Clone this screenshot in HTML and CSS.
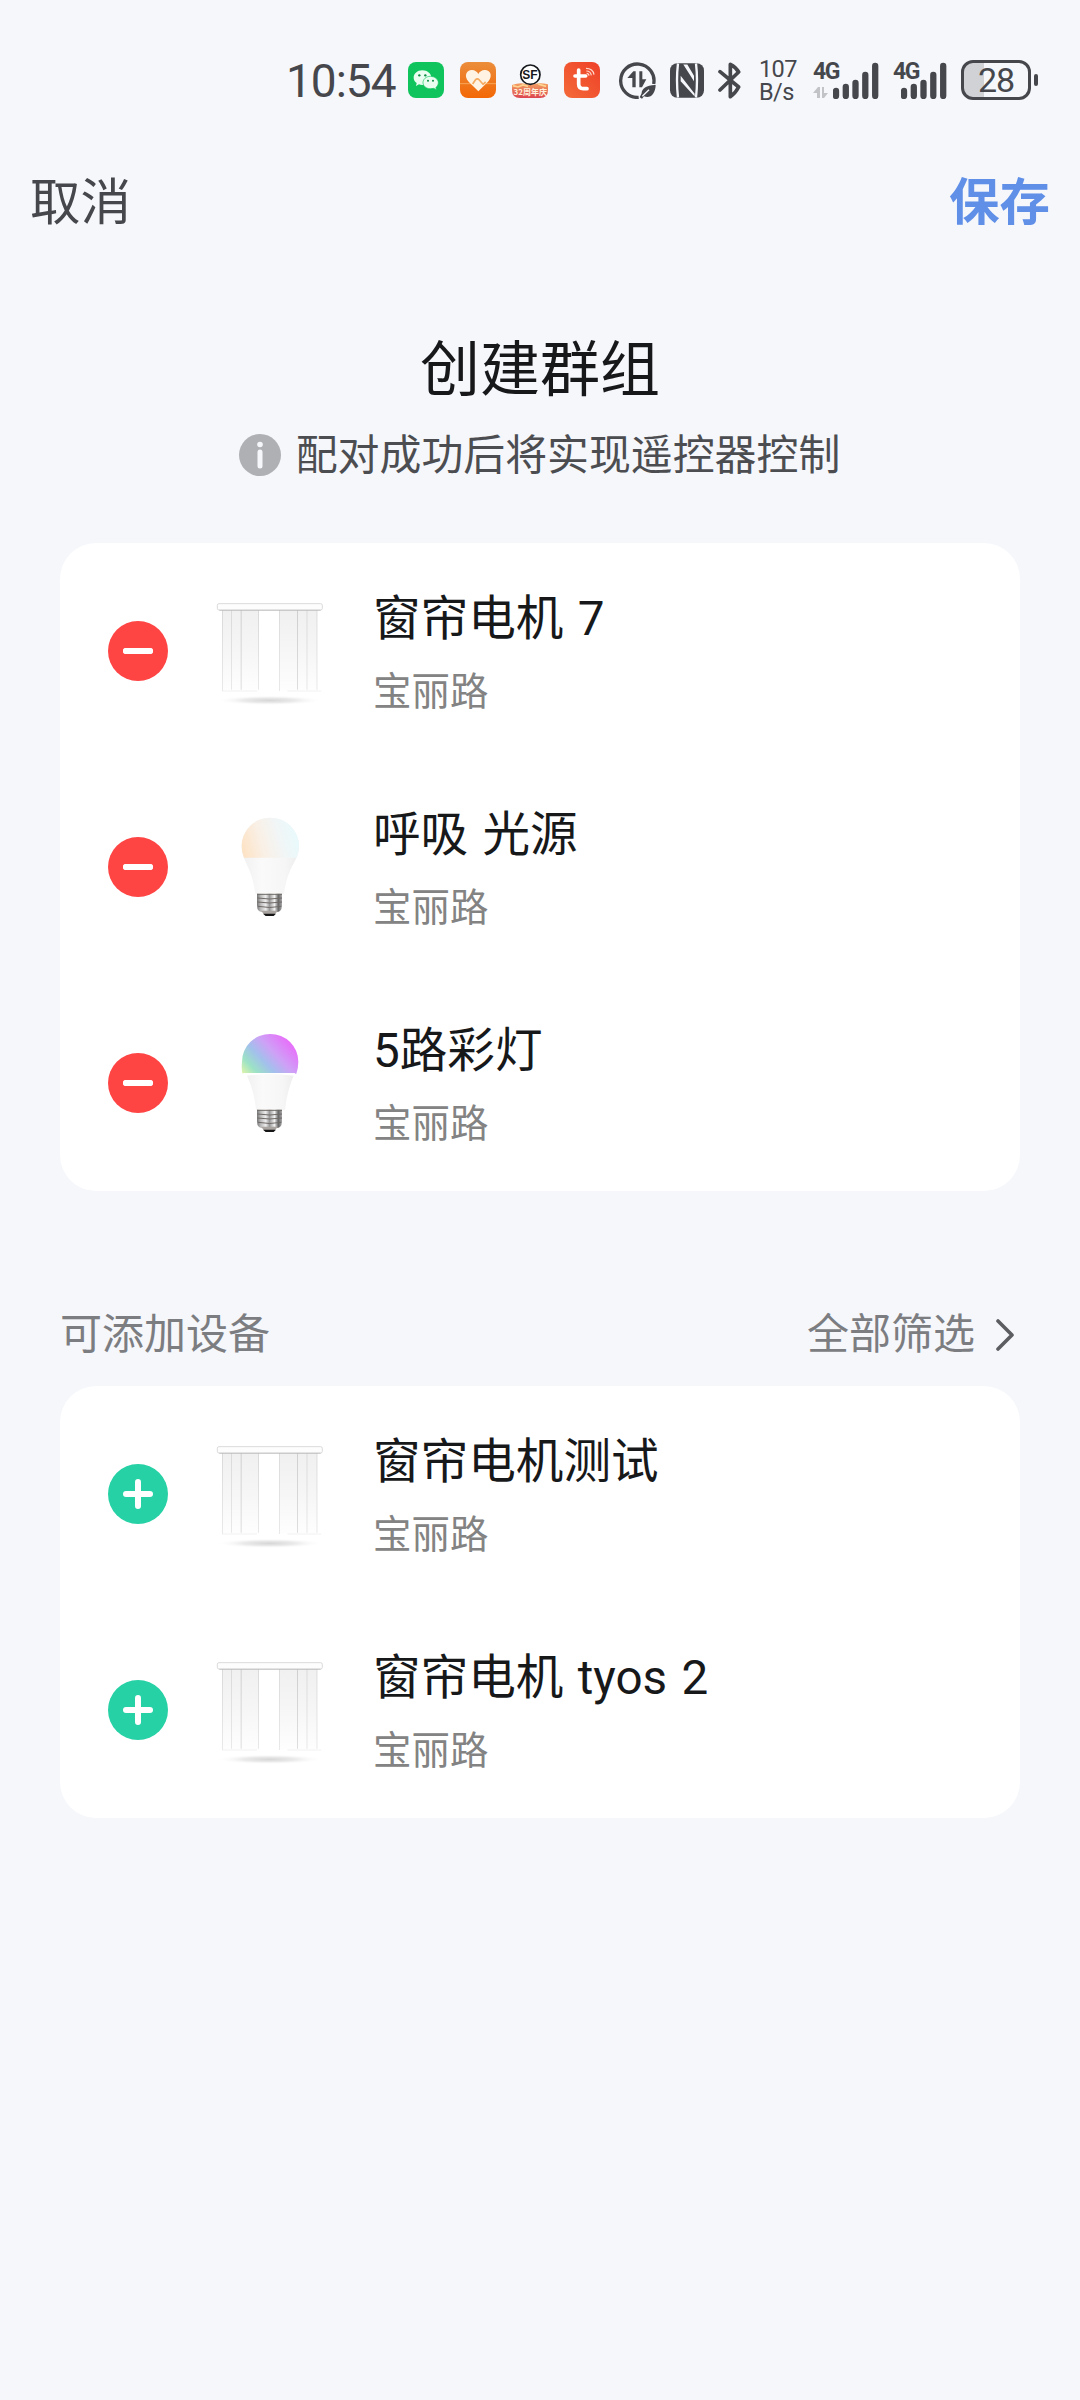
FILE: index.html
```html
<!DOCTYPE html>
<html lang="zh-CN">
<head>
<meta charset="utf-8">
<title>创建群组</title>
<link rel="stylesheet" href="styles.css">
</head>
<body>
<svg class="defs" width="0" height="0" aria-hidden="true">
  <defs>
    <linearGradient id="cloth" x1="0" y1="0" x2="0" y2="1"><stop offset="0" stop-color="#f0f0f0"/><stop offset=".5" stop-color="#f6f6f6"/><stop offset="1" stop-color="#fefefe"/></linearGradient>
    <linearGradient id="fold" x1="0" y1="0" x2="0" y2="1"><stop offset="0" stop-color="#cfcfcf"/><stop offset="1" stop-color="#dedede"/></linearGradient>
    <radialGradient id="shade"><stop offset="0" stop-color="#d6d6d6"/><stop offset=".5" stop-color="#ebebeb"/><stop offset="1" stop-color="#fff" stop-opacity="0"/></radialGradient>
    <linearGradient id="warm" x1="0" y1=".7" x2="1" y2=".5"><stop offset="0" stop-color="#fde3c6"/><stop offset=".35" stop-color="#f9f0e6"/><stop offset=".65" stop-color="#f2f5f5"/><stop offset="1" stop-color="#e8fafd"/></linearGradient>
    <linearGradient id="rgb" x1="0" y1="1" x2="1" y2=".35"><stop offset="0" stop-color="#e2f5a8"/><stop offset=".2" stop-color="#9ce2c6"/><stop offset=".42" stop-color="#a3c0ec"/><stop offset=".64" stop-color="#cda2f6"/><stop offset="1" stop-color="#ea6afa"/></linearGradient>
    <linearGradient id="body" x1="0" y1="0" x2="1" y2="0"><stop offset="0" stop-color="#f0f0f0"/><stop offset=".35" stop-color="#fafafa"/><stop offset=".75" stop-color="#f6f6f7"/><stop offset="1" stop-color="#ededee"/></linearGradient>
    <linearGradient id="metal" x1="0" y1="0" x2="1" y2="0"><stop offset="0" stop-color="#777"/><stop offset=".15" stop-color="#bbb"/><stop offset=".35" stop-color="#eee"/><stop offset=".5" stop-color="#999"/><stop offset=".7" stop-color="#f2f2f2"/><stop offset=".85" stop-color="#666"/><stop offset="1" stop-color="#aaa"/></linearGradient>
    <linearGradient id="orange" x1="0" y1="0" x2="0" y2="1"><stop offset="0" stop-color="#eb8d3b"/><stop offset="1" stop-color="#f36705"/></linearGradient>
    <linearGradient id="tomato" x1="0" y1="1" x2="1" y2="0"><stop offset="0" stop-color="#f46a39"/><stop offset="1" stop-color="#ee4028"/></linearGradient>
    <linearGradient id="banner" x1="0" y1="0" x2="0" y2="1"><stop offset="0" stop-color="#f4a263"/><stop offset="1" stop-color="#dc4550"/></linearGradient>
    <symbol id="curtain" viewBox="0 0 420 420">
      <path d="M66 86h111v244H66zM238 86h113v244H238z" fill="url(#cloth)"/>
      <path d="M66 86h2v244h-2zM93 86h2v240h-2zM122 86h3v240h-3zM175 86h2v240h-2zM238 86h2v244h-2zM291 86h3v240h-3zM320 86h2v240h-2zM350 86h2v240h-2z" fill="url(#fold)"/>
      <path d="M66 330h105M262 330h102" stroke="#ececec" stroke-width="2"/>
      <ellipse cx="208" cy="358" rx="160" ry="15" fill="url(#shade)"/>
      <rect x="52" y="68" width="315" height="19" rx="5" fill="#fdfdfd" stroke="#d2d2d2" stroke-width="2.5"/>
      <path d="M58 88h304" stroke="#b5b5b5" stroke-width="2"/>
    </symbol>
    <symbol id="screw" viewBox="0 0 420 420">
      <path d="M171 290h75v36q0 20-22 20h-31q-22 0-22-20z" fill="url(#metal)"/>
      <path d="M171 292h75M172 303q37 6 74 0M172 315q37 6 74 0M174 328q35 7 70 0" stroke="#6f6a68" stroke-width="3" fill="none"/>
      <path d="M183 341h51l-12 13q-14 5-28 0z" fill="#aaa4a0"/>
      <path d="M189 350h39l-7 7h-24z" fill="#151515"/>
    </symbol>
    <symbol id="bulb-warm" viewBox="0 0 420 420">
      <path d="M125 147a86 85 0 0 1 172 0c0 30-15 48-27 74-11 24-15 48-18 70h-86c-3-22-8-48-17-69-9-24-24-45-24-75z" fill="url(#body)"/>
      <path d="M125 147a86 85 0 0 1 172 0q0 18-8 35H132q-7-17-7-35z" fill="url(#warm)"/>
      <use href="#screw"/>
    </symbol>
    <symbol id="bulb-rgb" viewBox="0 0 420 420">
      <path d="M136 178h149c-16 37-26 74-30 113h-87c-3-40-15-80-32-113z" fill="url(#body)"/>
      <path d="M127 181q-3-16-1-35a84.500 83 0 0 1 169 0q0 18-6 36z" fill="url(#rgb)"/>
      <path d="M130 180h156l-5 8q-70-8-143 0z" fill="#fff"/>
      <use href="#screw"/>
    </symbol>
    <symbol id="bars" viewBox="0 0 46 37">
      <path d="M3 29v5M12.800 25v9M22.500 21v13M32.300 13v21M42.200 4v30" stroke="#46474c" stroke-width="6.3" stroke-linecap="round"/>
    </symbol>
  </defs>
</svg>

<div class="status">
  <span class="clock">10:54</span>
  <svg class="app" viewBox="0 0 108 108"><rect width="108" height="108" rx="24" fill="#0fc45c"/>
    <path d="M43 25c15 0 27 10 27 22S58 69 43 69q-6 0-10-2l-9 5 2-9c-6-4-9-10-9-16 0-12 11-22 26-22z" fill="#e9fdf0"/>
    <path d="M67 43c13 0 24 9 24 19 0 6-3 10-7 14l1 7-8-4q-5 1-10 1c-13 0-22-8-22-18s9-19 22-19z" fill="#e9fdf0" stroke="#0fc45c" stroke-width="2"/>
    <g fill="#0a8c42"><circle cx="34" cy="40" r="3.5"/><circle cx="52" cy="40" r="3.5"/><circle cx="60" cy="56" r="3"/><circle cx="75" cy="56" r="3"/></g></svg>
  <svg class="app" viewBox="0 0 108 108"><rect width="108" height="108" rx="24" fill="url(#orange)"/><path d="M0 65h108" stroke="#f7a657" stroke-width="3"/>
    <path d="M55 88 26 59C9 40 22 23 36 24q13 1 19 12 6-11 19-12c15-1 27 16 10 35z" fill="#fff4e3"/><path d="m38 66 8-12q6-7 12 0l11 13 8-7" fill="none" stroke="#f5ab62" stroke-width="5" stroke-linejoin="round"/></svg>
  <svg class="app" viewBox="0 0 108 108"><path d="M0 69q28-11 54 0 27-9 54-2v17q0 24-24 24H24Q0 108 0 84z" fill="url(#banner)"/><path d="m2 71 16 4 15-6 15 4M78 66l24 7" stroke="#ffd591" stroke-width="5" fill="none"/>
    <circle cx="55" cy="38" r="29" fill="#fff" stroke="#17191c" stroke-width="5"/><text class="sf" x="54" y="51" text-anchor="middle">SF</text><text class="sf-year" x="55" y="98" text-anchor="middle">32周年庆</text></svg>
  <svg class="app" viewBox="0 0 108 108"><rect width="108" height="108" rx="24" fill="url(#tomato)"/>
    <path d="M44 24v42q0 14 14 14h11M33 42h32" fill="none" stroke="#fff" stroke-width="11" stroke-linecap="round" stroke-linejoin="round"/><path d="M68 34q6 0 7 7M67 27q13 0 15 13M66 19q21 0 24 19" fill="none" stroke="#ffd8cd" stroke-width="3.5"/></svg>
  <svg class="traffic" viewBox="0 0 111 111"><path d="M104 66A50 50 0 1 0 59 106" fill="none" stroke="#46474c" stroke-width="10"/><path d="M25 48 43 28h7v48H40V48zM61 28h9v24h12L69 76h-8z" fill="#46474c"/><path d="M110 69c-25-1-43 11-42 25l-6 12 7 4 6-7c19 8 34-7 35-34z" fill="#46474c"/><path d="m70 103 20-20" stroke="#f5f7fb" stroke-width="4"/></svg>
  <svg class="nfc" viewBox="0 0 102 104"><rect width="102" height="104" rx="22" fill="#46474c"/><path d="M24 1q-6 50 0 102M78 1q6 50 0 102" stroke="#f5f7fb" stroke-width="7" fill="none"/><path d="m40 4 32 50V38L52 4zM32 38l42 54v8L32 54z" fill="#f5f7fb"/></svg>
  <svg class="bt" viewBox="0 0 72 111"><path d="M6 29 62 75Q52 94 37 104V7q16 8 25 23L6 84" fill="none" stroke="#46474c" stroke-width="11" stroke-linecap="round" stroke-linejoin="round"/></svg>
  <span class="speed"><span>107</span><span>B/s</span></span>
  <span class="net net-a"><b>4G</b><svg class="updown" viewBox="0 0 16 12"><path d="m0 6 5-6h2v11H4V6zM9 0h2v6h4l-4 5H9z" fill="#c2c3c7"/></svg><svg class="bars"><use href="#bars"/></svg></span>
  <span class="net net-b"><b>4G</b><svg class="bars"><use href="#bars"/></svg></span>
  <span class="battery"><span>28</span></span><i class="nub"></i>
</div>

<header class="nav"><span>取消</span><strong>保存</strong></header>

<main>
  <h1>创建群组</h1>
  <p class="hint"><svg viewBox="0 0 42 42"><circle cx="21" cy="21" r="21" fill="#aeb0b4"/><circle cx="21" cy="10.5" r="2.8" fill="#f5f7fb"/><path d="M21 18v14" stroke="#f5f7fb" stroke-width="5" stroke-linecap="round"/></svg><span>配对成功后将实现遥控器控制</span></p>

  <section class="card">
    <div class="row"><i class="toggle minus"></i><svg class="pic"><use href="#curtain"/></svg><div class="info"><span class="name">窗帘电机 7</span><span class="room">宝丽路</span></div></div>
    <div class="row"><i class="toggle minus"></i><svg class="pic"><use href="#bulb-warm"/></svg><div class="info"><span class="name">呼吸 光源</span><span class="room">宝丽路</span></div></div>
    <div class="row"><i class="toggle minus"></i><svg class="pic"><use href="#bulb-rgb"/></svg><div class="info"><span class="name">5路彩灯</span><span class="room">宝丽路</span></div></div>
  </section>

  <div class="bar"><span>可添加设备</span><span class="filter">全部筛选<svg viewBox="0 0 20 32"><path d="m3 2 14 14L3 30" fill="none" stroke="#5c5d61" stroke-width="3.6" stroke-linecap="round" stroke-linejoin="round"/></svg></span></div>

  <section class="card">
    <div class="row"><i class="toggle plus"></i><svg class="pic"><use href="#curtain"/></svg><div class="info"><span class="name">窗帘电机测试</span><span class="room">宝丽路</span></div></div>
    <div class="row"><i class="toggle plus"></i><svg class="pic"><use href="#curtain"/></svg><div class="info"><span class="name">窗帘电机 tyos 2</span><span class="room">宝丽路</span></div></div>
  </section>
</main>
</body>
</html>
```
FILE: styles.css
```css
* { box-sizing: border-box; }
body {
  margin: 0;
  min-height: 2400px;
  background: #f5f7fb;
  color: #17181a;
  font-family: Roboto, "Noto Sans CJK SC", sans-serif;
}
svg { display: block; flex: none; }
.defs { position: absolute; }

.status {
  display: flex;
  align-items: center;
  height: 163px;
  padding: 0 0 3px 286px;
  color: #46474c;
}
.clock { width: 122px; font-size: 46px; letter-spacing: -1px; line-height: 46px; padding-top: 1px; }
.app { width: 36px; height: 36px; margin-right: 16px; }
.sf { font: bold 36px "Liberation Sans", sans-serif; fill: #17191c; }
.sf-year { font: bold 24px "Noto Sans CJK SC", sans-serif; fill: #fff0dc; }
.traffic { width: 37px; height: 37px; margin-left: 3px; }
.nfc { width: 34px; height: 35px; margin-left: 14px; }
.bt { width: 24px; height: 37px; margin-left: 14px; }
.speed {
  display: flex;
  flex-direction: column;
  width: 40px;
  margin-left: 17px;
  padding-top: 1px;
  font-size: 23.5px;
  line-height: 23px;
  letter-spacing: -.6px;
}
.net {
  display: grid;
  height: 37px;
}
.net b { grid-area: 1 / 1; font-size: 23px; line-height: 19px; letter-spacing: -1.5px; }
.net-a { width: 66px; margin-left: 14px; }
.net-b { width: 54px; margin-left: 14px; }
.updown { grid-area: 1 / 1; align-self: end; width: 16px; height: 12px; }
.bars { grid-area: 1 / 1; justify-self: end; align-self: end; width: 46px; height: 37px; }
.battery {
  display: flex;
  align-items: center;
  justify-content: center;
  width: 70px;
  height: 40px;
  margin-left: 14px;
  border: 3px solid #46474c;
  border-radius: 12px;
  background: linear-gradient(90deg, #d0d2d6 20px, transparent 20px);
  font-size: 34px;
  line-height: 34px;
  letter-spacing: -1px;
}
.nub { width: 4px; height: 12px; margin-left: 3px; border-radius: 2px; background: #46474c; }

.nav {
  display: flex;
  justify-content: space-between;
  padding: 0 30px;
  height: 80px;
  font-size: 50.5px;
  line-height: 80px;
  color: #46474c;
}
.nav strong { color: #608fe8; font-weight: 700; }

main { padding: 0 60px; }
h1 {
  margin: 88px 0 0;
  font-size: 60px;
  font-weight: 400;
  line-height: 80px;
  text-align: center;
}
.hint {
  display: flex;
  justify-content: center;
  align-items: center;
  gap: 15px;
  height: 60px;
  margin: 15px 0 57px;
  padding-right: 1px;
  font-size: 41.9px;
  line-height: 60px;
  color: #4c4d51;
}
.hint svg { width: 42px; height: 42px; margin-bottom: 3px; }

.card { border-radius: 36px; background: #fff; }
.row {
  display: flex;
  align-items: center;
  height: 216px;
  padding-left: 48px;
}
.toggle {
  display: grid;
  place-items: center;
  width: 60px;
  height: 60px;
  margin-right: 32px;
  border-radius: 50%;
}
.toggle::before, .toggle::after {
  content: "";
  grid-area: 1 / 1;
  width: 30px;
  height: 6px;
  border-radius: 3px;
  background: #fff;
}
.minus { background: #ff4444; }
.plus { background: #26d1a5; }
.plus::after { width: 6px; height: 30px; }
.pic { width: 140px; height: 140px; margin-right: 33px; }
.info { display: flex; flex-direction: column; gap: 8px; padding-top: 4px; }
.name { font-size: 47.6px; line-height: 70px; word-spacing: 2.5px; }
.room { font-size: 38.5px; line-height: 60px; color: #838383; }

.bar {
  display: flex;
  justify-content: space-between;
  height: 80px;
  margin: 104px 5px 11px 0;
  font-size: 42px;
  line-height: 80px;
  color: #7c7d81;
}
.filter { display: flex; align-items: center; gap: 20px; }
.filter svg { width: 20px; height: 32px; }
```
